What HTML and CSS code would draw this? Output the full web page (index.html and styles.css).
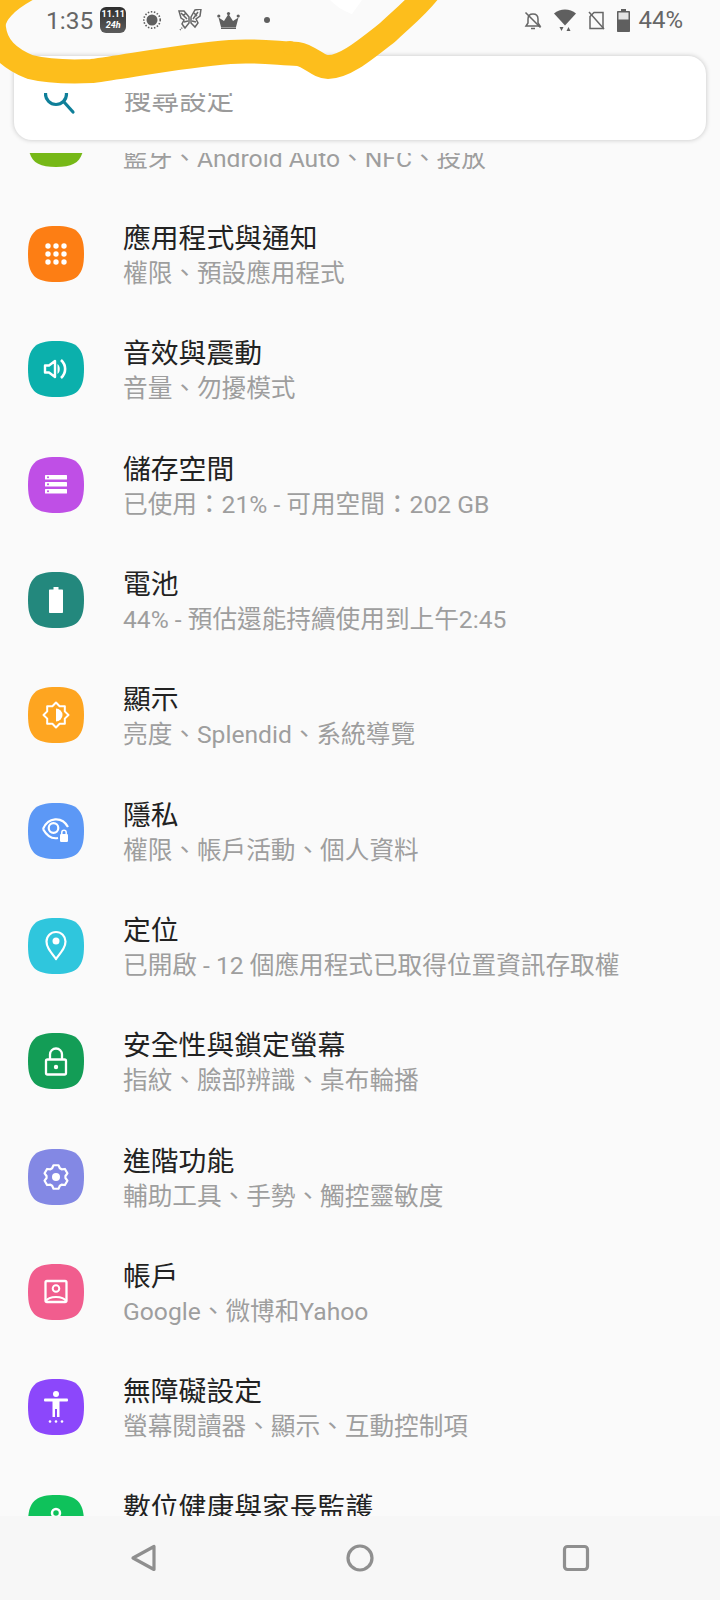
FILE: index.html
```html
<!DOCTYPE html>
<html lang="zh-Hant">

<head>
    <meta charset="UTF-8">
    <meta name="viewport" content="width=device-width, initial-scale=1.0">
    <title>設定</title>
    <link rel="stylesheet" href="styles.css">
</head>

<body>
    <svg class="defs" width="0" height="0">
        <defs>
            <path id="squircle" d="M28 0C49 0 56 7 56 28C56 49 49 56 28 56C7 56 0 49 0 28C0 7 7 0 28 0Z" />
        </defs>
    </svg>

    <div id="phone">
        <!-- Status bar -->
        <div class="status-bar">
            <div class="status-left">
                <span class="clock">1:35</span>
                <div class="badge"><span>11.11</span><span class="badge-low">24h</span></div>
                <svg class="st-sun" width="18" height="18" viewBox="0 0 18 18">
                    <circle cx="9" cy="9" r="5.500" fill="#5f5f5f" />
                    <circle cx="9" cy="9" r="8.200" fill="none" stroke="#5f5f5f" stroke-width="1.600" stroke-dasharray="1.500 1.600" />
                </svg>
                <svg class="st-fly" width="24" height="22" viewBox="0 0 24 22" fill="none" stroke="#666" stroke-width="1.500">
                    <path d="M11 8L6 2L1 2L3 9L6 11L4 15L7 19L11 14Z" />
                    <path d="M13 8L17 1L23 0L22 7L18 10L20 14L17 18L13 14Z" />
                    <path d="M3 4L9 10M20 3L15 10M6 13L10 12M18 13L14 12M5 7L8 4M19 7L16 4" />
                    <path d="M2 21L5 18" stroke-dasharray="1 1" />
                </svg>
                <svg class="st-crown" width="23" height="17" viewBox="0 0 23 17">
                    <path d="M4 15L1.500 5.500L7 9L11.500 2L16 9L21.500 5.500L19 15Z" fill="#5f5f5f" />
                    <circle cx="1.800" cy="4" r="1.600" fill="#5f5f5f" />
                    <circle cx="11.500" cy="1.600" r="1.600" fill="#5f5f5f" />
                    <circle cx="21.200" cy="4" r="1.600" fill="#5f5f5f" />
                    <rect x="4" y="15.400" width="15" height="1.600" fill="#5f5f5f" />
                </svg>
                <span class="st-dot"></span>
            </div>
            <div class="status-right">
                <svg width="18" height="19" viewBox="0 0 18 19" fill="none" stroke="#666" stroke-width="1.500">
                    <path d="M2 15H16L14 12V8C14 5 12 3 9 3C6 3 4 5 4 8V12Z" />
                    <path d="M7 17.500H11M1.500 1.500L16.500 16.500" />
                </svg>
                <svg width="22" height="23" viewBox="0 0 22 23" fill="#5f5f5f">
                    <path d="M0 4.500C6 -1 16 -1 22 4.500L11 16.500Z" />
                    <path d="M5.500 18H9.500L7.500 22ZM12.500 22L14.500 18L16.500 22Z" />
                </svg>
                <svg width="17" height="19" viewBox="0 0 17 19" fill="none" stroke="#666" stroke-width="1.500">
                    <path d="M6 1.500H15V17.500H2V5.500Z" />
                    <path d="M1 1L16 18" />
                </svg>
                <svg width="13" height="23" viewBox="0 0 13 23">
                    <path d="M4 0H9V2H12.200C12.700 2 13 2.300 13 2.800V22C13 22.600 12.600 23 12 23H1C0.400 23 0 22.600 0 22V2.800C0 2.300 0.300 2 0.800 2H4Z" fill="#5f5f5f" />
                    <rect x="1.500" y="3.500" width="10" height="7" fill="#e4e4e4" />
                </svg>
                <span class="battery-text">44%</span>
            </div>
        </div>

        <!-- Search card -->
        <div class="search-card">
            <svg class="search-icon" width="34" height="34" viewBox="0 0 34 34" fill="none" stroke="#0f7f99" stroke-width="3.200">
                <circle cx="12" cy="13" r="10.500" />
                <path d="M20 21L29 31" stroke-linecap="round" />
            </svg>
            <span class="search-text">搜尋設定</span>
        </div>

        <!-- Settings list -->
        <div class="list-clip">
            <div class="list">
                <div class="row">
                    <svg class="row-icon" viewBox="0 0 56 56"><use href="#squircle" fill="#76b817" /></svg>
                    <div class="row-text"><div class="row-title">已連線的裝置</div><div class="row-sub">藍牙、Android Auto、NFC、投放</div></div>
                </div>
                <div class="row">
                    <svg class="row-icon" viewBox="0 0 56 56">
                        <use href="#squircle" fill="#fd7e14" />
                        <g fill="#fff">
                            <circle cx="20" cy="20" r="2.700" /><circle cx="28" cy="20" r="2.700" /><circle cx="36" cy="20" r="2.700" />
                            <circle cx="20" cy="28" r="2.700" /><circle cx="28" cy="28" r="2.700" /><circle cx="36" cy="28" r="2.700" />
                            <circle cx="20" cy="36" r="2.700" /><circle cx="28" cy="36" r="2.700" /><circle cx="36" cy="36" r="2.700" />
                        </g>
                    </svg>
                    <div class="row-text"><div class="row-title">應用程式與通知</div><div class="row-sub">權限、預設應用程式</div></div>
                </div>
                <div class="row">
                    <svg class="row-icon" viewBox="0 0 56 56">
                        <use href="#squircle" fill="#0bb0ac" />
                        <path d="M17 24.500H21L27 20V36L21 31.500H17Z" fill="none" stroke="#fff" stroke-width="2.400" stroke-linejoin="round" />
                        <path d="M29.500 23C32.500 25 32.500 31 29.500 33Z" fill="#fff" />
                        <path d="M33 19C38.500 24 38.500 32 33 37" fill="none" stroke="#fff" stroke-width="2.600" />
                    </svg>
                    <div class="row-text"><div class="row-title">音效與震動</div><div class="row-sub">音量、勿擾模式</div></div>
                </div>
                <div class="row">
                    <svg class="row-icon" viewBox="0 0 56 56">
                        <use href="#squircle" fill="#bf4fe6" />
                        <g fill="#fff">
                            <rect x="17" y="18" width="22" height="4.500" rx="0.500" />
                            <rect x="17" y="25" width="22" height="4.500" rx="0.500" />
                            <rect x="17" y="32" width="22" height="4.500" rx="0.500" />
                        </g>
                        <g fill="#bf4fe6">
                            <circle cx="20" cy="20.200" r="1" /><circle cx="20" cy="27.200" r="1" /><circle cx="20" cy="34.200" r="1" />
                        </g>
                    </svg>
                    <div class="row-text"><div class="row-title">儲存空間</div><div class="row-sub">已使用：21% - 可用空間：202 GB</div></div>
                </div>
                <div class="row">
                    <svg class="row-icon" viewBox="0 0 56 56">
                        <use href="#squircle" fill="#23887d" />
                        <path d="M25.500 15H30.500V17.500H34C34.600 17.500 35 17.900 35 18.500V40C35 40.600 34.600 41 34 41H22C21.400 41 21 40.600 21 40V18.500C21 17.900 21.400 17.500 22 17.500H25.500Z" fill="#fff" />
                    </svg>
                    <div class="row-text"><div class="row-title">電池</div><div class="row-sub">44% - 預估還能持續使用到上午2:45</div></div>
                </div>
                <div class="row">
                    <svg class="row-icon" viewBox="0 0 56 56">
                        <use href="#squircle" fill="#fea520" />
                        <polygon points="28,15.500 31.640,19.220 36.840,19.160 36.780,24.360 40.500,28 36.780,31.640 36.840,36.840 31.640,36.780 28,40.500 24.360,36.780 19.160,36.840 19.220,31.640 15.500,28 19.220,24.360 19.160,19.160 24.360,19.220" fill="none" stroke="#fff" stroke-width="2" stroke-linejoin="round" />
                        <path d="M28 21.500A6.500 6.500 0 0 1 28 34.500Z" fill="#fff" />
                    </svg>
                    <div class="row-text"><div class="row-title">顯示</div><div class="row-sub">亮度、Splendid、系統導覽</div></div>
                </div>
                <div class="row">
                    <svg class="row-icon" viewBox="0 0 56 56">
                        <use href="#squircle" fill="#5c98f6" />
                        <path d="M15 26C20 14 34 13 40 24M15 26C20 35 25 36 30 35" fill="none" stroke="#fff" stroke-width="2.200" />
                        <circle cx="25.500" cy="25" r="4.800" fill="none" stroke="#fff" stroke-width="2.200" />
                        <rect x="32" y="31" width="8" height="8" rx="1.200" fill="#fff" />
                        <path d="M33.800 31V29.500A2.200 2.200 0 0 1 38.200 29.500V31" fill="none" stroke="#fff" stroke-width="1.500" />
                    </svg>
                    <div class="row-text"><div class="row-title">隱私</div><div class="row-sub">權限、帳戶活動、個人資料</div></div>
                </div>
                <div class="row">
                    <svg class="row-icon" viewBox="0 0 56 56">
                        <use href="#squircle" fill="#2fc6dd" />
                        <path d="M28 41C22 33 18.500 29 18.500 23.500A9.500 9.500 0 0 1 37.500 23.500C37.500 29 34 33 28 41Z" fill="none" stroke="#fff" stroke-width="2.200" stroke-linejoin="round" />
                        <circle cx="28" cy="23" r="3.500" fill="#fff" />
                    </svg>
                    <div class="row-text"><div class="row-title">定位</div><div class="row-sub">已開啟 - 12 個應用程式已取得位置資訊存取權</div></div>
                </div>
                <div class="row">
                    <svg class="row-icon" viewBox="0 0 56 56">
                        <use href="#squircle" fill="#139d56" />
                        <rect x="18" y="26.500" width="20" height="15" rx="1.500" fill="none" stroke="#fff" stroke-width="2.300" />
                        <path d="M22 26.500V21.500A6 6 0 0 1 34 21.500V26.500" fill="none" stroke="#fff" stroke-width="2.300" />
                        <circle cx="28" cy="34" r="2.200" fill="#fff" />
                    </svg>
                    <div class="row-text"><div class="row-title">安全性與鎖定螢幕</div><div class="row-sub">指紋、臉部辨識、桌布輪播</div></div>
                </div>
                <div class="row">
                    <svg class="row-icon" viewBox="0 0 56 56">
                        <use href="#squircle" fill="#8388e4" />
                        <polygon points="25.500,16.260 30.500,16.260 31.860,19.320 33.580,20.310 36.920,19.970 39.410,24.290 37.450,27.010 37.450,28.990 39.410,31.710 36.920,36.030 33.580,35.690 31.860,36.680 30.500,39.740 25.500,39.740 24.140,36.680 22.420,35.690 19.080,36.030 16.590,31.710 18.550,28.990 18.550,27.010 16.590,24.290 19.080,19.970 22.420,20.310 24.140,19.320" fill="none" stroke="#fff" stroke-width="2.200" stroke-linejoin="round" />
                        <circle cx="28" cy="28" r="4" fill="#fff" />
                    </svg>
                    <div class="row-text"><div class="row-title">進階功能</div><div class="row-sub">輔助工具、手勢、觸控靈敏度</div></div>
                </div>
                <div class="row">
                    <svg class="row-icon" viewBox="0 0 56 56">
                        <use href="#squircle" fill="#f15d8e" />
                        <rect x="17.500" y="17" width="21" height="21" rx="1.500" fill="none" stroke="#fff" stroke-width="2.300" />
                        <circle cx="28" cy="24.500" r="3.300" fill="none" stroke="#fff" stroke-width="2" />
                        <path d="M18 37C21 31.500 35 31.500 38 37" fill="none" stroke="#fff" stroke-width="2" />
                    </svg>
                    <div class="row-text"><div class="row-title">帳戶</div><div class="row-sub">Google、微博和Yahoo</div></div>
                </div>
                <div class="row">
                    <svg class="row-icon" viewBox="0 0 56 56">
                        <use href="#squircle" fill="#8c47fb" />
                        <g fill="#fff">
                            <circle cx="28" cy="15" r="3" />
                            <rect x="16" y="19.500" width="24" height="3" rx="1" />
                            <path d="M24.500 22H31.500V38H29V30H27V38H24.500Z" />
                            <circle cx="22" cy="42.500" r="1.300" /><circle cx="28" cy="42.500" r="1.300" /><circle cx="34" cy="42.500" r="1.300" />
                        </g>
                    </svg>
                    <div class="row-text"><div class="row-title">無障礙設定</div><div class="row-sub">螢幕閱讀器、顯示、互動控制項</div></div>
                </div>
                <div class="row">
                    <svg class="row-icon" viewBox="0 0 56 56">
                        <use href="#squircle" fill="#0fc25b" />
                        <circle cx="28" cy="18" r="4" fill="none" stroke="#fff" stroke-width="2.500" />
                    </svg>
                    <div class="row-text"><div class="row-title">數位健康與家長監護</div><div class="row-sub">螢幕使用時間、應用程式計時器</div></div>
                </div>
            </div>
        </div>

        <!-- Navigation bar -->
        <div class="nav-bar">
            <svg width="28" height="28" viewBox="0 0 28 28" fill="none" stroke="#8f8f8f" stroke-width="3.200" stroke-linejoin="round">
                <path d="M24 2.500V25.500L3 14Z" />
            </svg>
            <svg width="28" height="28" viewBox="0 0 28 28" fill="none" stroke="#8f8f8f" stroke-width="3.200">
                <circle cx="14" cy="14" r="12" />
            </svg>
            <svg width="28" height="28" viewBox="0 0 28 28" fill="none" stroke="#8f8f8f" stroke-width="3.200">
                <rect x="2.500" y="2.500" width="23" height="23" rx="3" />
            </svg>
        </div>

        <!-- Marker scribble drawn over the screenshot, with the white smear under it -->
        <svg class="scribble" width="720" height="160" viewBox="0 0 720 160" fill="none" stroke-linecap="round" stroke-linejoin="round">
            <path d="M40 84H240" stroke="#fff" stroke-width="18" stroke-linecap="butt" />
            <path d="M330 0C338 8 346 12 352 14L362 0Z" fill="#fff" stroke="none" />
            <path d="M26 -10C8 0 -8 14 -6 28C-4 46 8 58 30 67C50 72 70 72 92 71C130 66 180 56 230 52C255 50 275 53 298 54C310 56 318 67 328 67C345 67 365 50 388 32C405 16 418 6 430 -10" stroke="#fdbe1c" stroke-width="24" />
            <circle cx="290" cy="48" r="7" fill="#fdbe1c" />
        </svg>
    </div>
</body>

</html>
```

FILE: styles.css
```css
body {
    margin: 0;
    background-color: #fafafa;
    font-family: Roboto, "Noto Sans CJK TC", sans-serif;
}

.defs {
    display: block;
    height: 0;
}

#phone {
    position: relative;
    display: flex;
    flex-direction: column;
    width: 720px;
    height: 1600px;
    overflow: hidden;
    background-color: #fafafa;
}

/* status bar */
.status-bar {
    display: flex;
    justify-content: space-between;
    align-items: center;
    flex: none;
    height: 40px;
    margin-bottom: 16px;
    padding: 0 37px 0 46px;
    color: #666;
}

.status-left,
.status-right {
    display: flex;
    align-items: center;
}

.clock {
    font-size: 24.5px;
    margin-right: 7px;
}

.badge {
    display: flex;
    flex-direction: column;
    align-items: center;
    justify-content: center;
    width: 26px;
    height: 26px;
    border-radius: 6px;
    background: linear-gradient(#2e2e2e, #5c5c5c);
    color: #fff;
    font-size: 9px;
    font-weight: 700;
    line-height: 11px;
}

.badge-low {
    font-style: italic;
}

.st-sun {
    margin-left: 17px;
}

.st-fly {
    margin-left: 17px;
}

.st-crown {
    margin-left: 15px;
}

.st-dot {
    width: 6px;
    height: 6px;
    margin-left: 24px;
    border-radius: 50%;
    background-color: #5f5f5f;
}

.status-right svg {
    margin-right: 12px;
}

.status-right svg:nth-of-type(4) {
    margin-right: 8px;
}

.battery-text {
    font-size: 24px;
}

/* search */
.search-card {
    display: flex;
    align-items: center;
    flex: none;
    height: 84px;
    margin: 0 14px 13px;
    background-color: #fff;
    border-radius: 18px;
    box-shadow: 0 0 5px rgba(0, 0, 0, 0.22);
}

.search-icon {
    flex: none;
    margin: 0 46px 0 30px;
}

.search-text {
    font-size: 27.5px;
    color: #9a9a9a;
}

/* list */
.list-clip {
    flex: 1;
    min-height: 0;
    overflow: hidden;
}

.list {
    margin-top: -72px;
}

.row {
    display: flex;
    align-items: center;
    height: 115.33px;
    padding-left: 28px;
}

.row-icon {
    flex: none;
    width: 56px;
    height: 56px;
    margin-right: 39px;
}

.row-text {
    padding-top: 4px;
}

.row-title {
    font-size: 27.8px;
    line-height: 36px;
    color: #222;
}

.row-sub {
    font-size: 24.65px;
    line-height: 34px;
    color: #9e9e9e;
}

/* navigation */
.nav-bar {
    display: flex;
    justify-content: space-between;
    align-items: center;
    flex: none;
    height: 84px;
    padding: 0 130px;
    background-color: #f7f7f7;
}

.scribble {
    position: absolute;
    top: 0;
    left: 0;
}
```
